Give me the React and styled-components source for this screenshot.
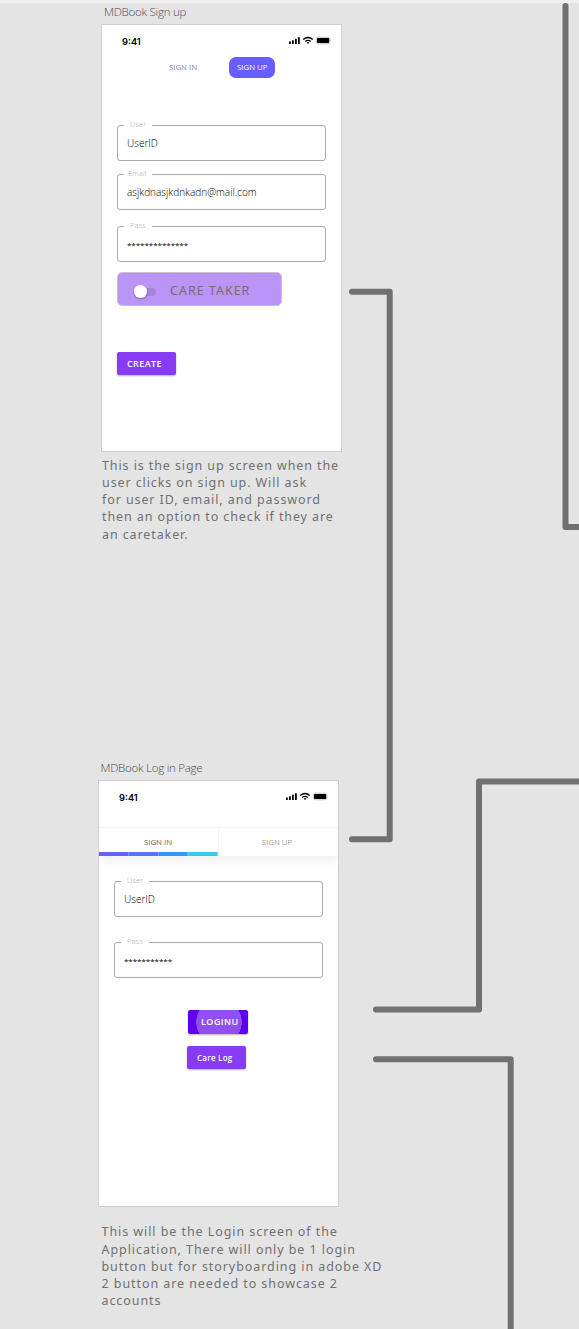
import React from 'react';
import styled, { createGlobalStyle } from 'styled-components';

const GlobalStyle = createGlobalStyle`
  * { box-sizing: border-box; }
  body {
    margin: 0;
    background: #e4e4e4;
    font-family: 'Open Sans', 'Noto Sans', sans-serif;
  }
`;

const Canvas = styled.main`
  position: relative;
  width: 579px;
  height: 1329px;
  overflow: hidden;
  border-top: 3px solid #f0f0f0;
`;

const Connectors = styled.svg`
  position: absolute;
  left: 0;
  top: -3px;
  fill: none;
  stroke: #707070;
  stroke-width: 6;
  stroke-linecap: round;
  stroke-linejoin: round;
`;

const Placed = styled.section`
  position: absolute;
  left: ${(p) => p.$x}px;
  top: ${(p) => p.$y - 3}px;
`;

const BoardTitle = styled.h2`
  margin: 0 0 0 3px;
  height: 18px;
  font-size: 11.5px;
  line-height: 16px;
  font-weight: 330;
  letter-spacing: ${(p) => p.$spacing}px;
  color: #4c4c4c;
  white-space: nowrap;
`;

const Board = styled.div`
  width: 241px;
  height: ${(p) => p.$height}px;
  background: #fff;
  border: 1px solid #cfcfcf;
`;

const StatusBar = styled.header`
  display: flex;
  align-items: center;
  justify-content: space-between;
  height: 32px;
  padding: 1px 9px 0 20px;
`;

const Clock = styled.span`
  font-family: Inter, sans-serif;
  font-size: 9.3px;
  font-weight: 600;
  line-height: 12px;
  color: #000;
`;

const StatusIcons = styled.svg`
  display: block;
  margin-top: -3px;
`;

const PillNav = styled.nav`
  display: flex;
  align-items: center;
  height: 21px;
  padding-left: 67px;
`;

const NavLink = styled.span`
  width: 59.5px;
  height: 21px;
  font-size: 7.8px;
  line-height: 20px;
  color: #7c86a2;
  white-space: nowrap;
`;

const NavPill = styled(NavLink)`
  width: 46.5px;
  height: 20.5px;
  padding-left: 1px;
  text-align: center;
  border-radius: 7px;
  background: #665eff;
  color: #fff;
`;

const TabBar = styled.nav`
  display: flex;
  height: 29px;
  margin-top: 14px;
  border-top: 1px solid #f4f4f4;
  box-shadow: 0 5px 9px rgba(60, 70, 90, 0.08);
  clip-path: inset(0 0 -16px 0);
`;

const Tab = styled.div`
  display: flex;
  flex-direction: column;
  flex: 0 0 ${(p) => p.$width}px;
  border-right: ${(p) => (p.$active ? '1px solid #f4f4f4' : '0')};
  font-size: 7.8px;
  line-height: 28px;
  text-align: center;
  color: ${(p) => (p.$active ? '#5f6373' : '#959db2')};
`;

const TabLabel = styled.span`
  height: 24px;
  padding-right: 1px;
`;

const TabStripe = styled.div`
  display: grid;
  grid-template-columns: repeat(4, 1fr);
  height: 4px;
`;

const StripePart = styled.i`
  background: ${(p) => p.$color};
  box-shadow: inset -0.4px 0 0 rgba(255, 255, 255, 0.7);
`;

const Form = styled.form`
  display: flex;
  flex-direction: column;
  align-items: flex-start;
  padding: ${(p) => p.$top}px 0 0 15px;
`;

const FieldBox = styled.label`
  position: relative;
  display: flex;
  align-items: center;
  width: 209px;
  height: 36px;
  margin-bottom: ${(p) => p.$gap}px;
  padding-left: 9px;
  border: 1px solid #ababab;
  border-radius: 3px;
`;

const FieldLabel = styled.span`
  position: absolute;
  left: 6px;
  top: -6px;
  width: 28px;
  height: 10px;
  padding-left: ${(p) => p.$indent}px;
  background: #fff;
  font-size: 7.3px;
  font-weight: 300;
  line-height: 9px;
  letter-spacing: 0.2px;
  color: #a4a4a4;
`;

const FieldValue = styled.span`
  padding-top: ${(p) => (p.$masked ? 1 : 0)}px;
  font-size: ${(p) => (p.$masked ? 8 : 10)}px;
  font-weight: ${(p) => (p.$masked ? 400 : 350)};
  letter-spacing: ${(p) => (p.$masked ? -0.04 : 0.02)}px;
  line-height: 14px;
  color: #000;
`;

const CareToggle = styled.div`
  display: flex;
  align-items: center;
  width: 165px;
  height: 34px;
  padding-left: 16px;
  border: 1px solid #cabfd9;
  border-radius: 5px;
  background: #bb94f7;
  font-family: 'Noto Sans', sans-serif;
  font-size: 12.5px;
  letter-spacing: 1px;
  color: #707070;
`;

const CareLabel = styled.span`
  padding-top: 3px;
`;

const SwitchTrack = styled.span`
  display: flex;
  align-items: center;
  width: 22px;
  height: 8px;
  margin: 5px 14px 0 0;
  border-radius: 4px;
  background: #a583d6;
`;

const SwitchKnob = styled.span`
  width: 12.5px;
  height: 12.5px;
  border-radius: 50%;
  background: #fff;
  box-shadow: 0 1px 2px rgba(0, 0, 0, 0.35);
`;

const Button = styled.button`
  width: ${(p) => (p.$pressed ? 60 : 59)}px;
  height: ${(p) => (p.$pressed ? 24 : 23)}px;
  margin: ${(p) => p.$margin};
  padding: 0 0 0 ${(p) => p.$indent || 10}px;
  border: 0;
  border-radius: 2px;
  background: ${(p) =>
    p.$pressed ? 'radial-gradient(circle at 31px 12px, #914ff1 22.5px, #6002ee 23px)' : '#873bf4'};
  box-shadow: 0 1px 2px rgba(0, 0, 0, 0.3);
  color: #fff;
  font-family: inherit;
  font-size: ${(p) => p.$size}px;
  font-weight: 550;
  letter-spacing: ${(p) => p.$spacing}px;
  line-height: 22px;
  text-align: left;
  white-space: nowrap;
`;

const Note = styled.p`
  margin: 0;
  font-family: 'Noto Sans', sans-serif;
  font-size: 12.5px;
  line-height: 17.25px;
  letter-spacing: ${(p) => p.$spacing}px;
  color: #707070;
  white-space: pre;
`;

function Status() {
  return (
    <StatusBar>
      <Clock>9:41</Clock>
      <StatusIcons width="43" height="9" viewBox="0 0 43 9">
        <path d="M0 5.5h1.8V8H0zM3 4.3h1.8V8H3zM6 2.8h1.8V8H6zM9 1.3h1.8V8H9z" fill="#000" />
        <g fill="none" stroke="#000" strokeWidth="1.35">
          <path d="M14.2 3.5Q19 -0.5 23.8 3.5" />
          <path d="M16.2 5.5Q19 3.2 21.8 5.5" />
        </g>
        <path d="M17.6 6.5Q19 5.5 20.4 6.5L19 8z" fill="#000" />
        <rect x="27.4" y="1.2" width="13.4" height="6.6" rx="2" fill="none" stroke="#aaa" strokeWidth=".7" />
        <rect x="28" y="2" width="12.2" height="5" rx="1" fill="#000" />
        <path d="M41.6 3.5q1 1 0 2z" fill="#aaa" />
      </StatusIcons>
    </StatusBar>
  );
}

function Field({ label, value, gap, masked, indent = 6 }) {
  return (
    <FieldBox $gap={gap}>
      <FieldLabel $indent={indent}>{label}</FieldLabel>
      <FieldValue $masked={masked}>{value}</FieldValue>
    </FieldBox>
  );
}

export default function App() {
  return (
    <>
      <GlobalStyle />
      <Canvas>
        <Connectors width="579" height="1329" viewBox="0 0 579 1329">
          <path d="M352 291.7H389.7V839.2H352" />
          <path d="M565.5 6V527H585" />
          <path d="M585 781.5H479V1009.6H376" />
          <path d="M376 1059.2H510.7V1335" />
        </Connectors>

        <Placed $x={101} $y={4}>
          <BoardTitle $spacing={-0.25}>MDBook Sign up</BoardTitle>
        </Placed>
        <Placed $x={101} $y={24}>
          <Board $height={428}>
            <Status />
            <PillNav>
              <NavLink>SIGN IN</NavLink>
              <NavPill>SIGN UP</NavPill>
            </PillNav>
            <Form $top={47}>
              <Field label="User" value="UserID" gap={13} />
              <Field label="Email" value="asjkdnasjkdnkadn@mail.com" gap={16} indent={4} />
              <Field label="Pass" value="**************" gap={10} masked />
              <CareToggle>
                <SwitchTrack>
                  <SwitchKnob />
                </SwitchTrack>
                <CareLabel>CARE TAKER</CareLabel>
              </CareToggle>
              <Button type="button" $margin="46px 0 0" $size={9} $spacing={0.4}>CREATE</Button>
            </Form>
          </Board>
        </Placed>
        <Placed $x={102} $y={456.7}>
          <Note $spacing={0.9}>{`This is the sign up screen when the
user clicks on sign up. Will ask
for user ID, email, and password
then an option to check if they are
an caretaker.`}</Note>
        </Placed>

        <Placed $x={97.5} $y={760}>
          <BoardTitle $spacing={-0.25}>MDBook Log in Page</BoardTitle>
        </Placed>
        <Placed $x={98} $y={780}>
          <Board $height={427}>
            <Status />
            <TabBar>
              <Tab $width={120} $active>
                <TabLabel>SIGN IN</TabLabel>
                <TabStripe>
                  <StripePart $color="#665eff" />
                  <StripePart $color="#5773ff" />
                  <StripePart $color="#3497fd" />
                  <StripePart $color="#3acce1" />
                </TabStripe>
              </Tab>
              <Tab $width={117}>
                <TabLabel>SIGN UP</TabLabel>
              </Tab>
            </TabBar>
            <Form $top={25}>
              <Field label="User" value="UserID" gap={25} />
              <Field label="Pass" value="***********" gap={32} masked />
              <Button type="button" $margin="0 0 0 74px" $size={9} $spacing={0.45} $indent={13} $pressed>LOGINU</Button>
              <Button type="button" $margin="12px 0 0 73px" $size={8} $spacing={0.25}>Care Log</Button>
            </Form>
          </Board>
        </Placed>
        <Placed $x={101.5} $y={1223.3}>
          <Note $spacing={0.93}>{`This will be the Login screen of the
Application, There will only be 1 login
button but for storyboarding in adobe XD
2 button are needed to showcase 2
accounts`}</Note>
        </Placed>
      </Canvas>
    </>
  );
}
